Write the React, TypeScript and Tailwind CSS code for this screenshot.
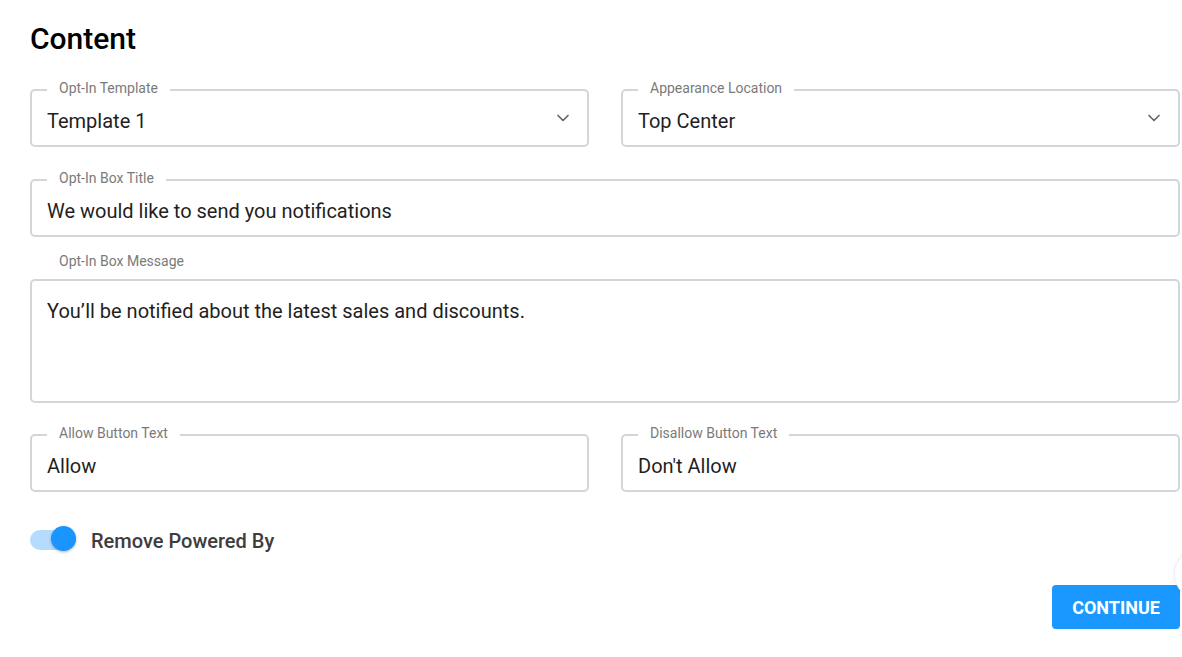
import { ChevronDown } from "lucide-react";

const font = { fontFamily: "Roboto, 'Liberation Sans', sans-serif" };

function OutlinedField({
  label,
  value,
  select = false,
}: {
  label: string;
  value: string;
  select?: boolean;
}) {
  return (
    <div className="relative flex h-[58px] items-center rounded-[5px] border-2 border-[#d2d5da] bg-white pl-[15px] pr-[14px]">
      <span className="absolute -top-[12px] left-[15px] bg-white px-3 text-[14px] leading-[18px] text-[#7a7a7a]">
        {label}
      </span>
      <span className="mt-[5px] flex-1 text-[20px] leading-6 text-[#1f1f1f]">{value}</span>
      {select ? <ChevronDown className="size-5 text-[#5f6670]" strokeWidth={2} aria-hidden="true" /> : null}
    </div>
  );
}

export default function App() {
  return (
    <div className="relative min-h-[657px] overflow-hidden bg-white" style={font}>
      <div className="ml-[30px] w-[1150px] pt-[21px]">
        <h1 className="text-[30px] font-medium leading-9 text-black">Content</h1>

        <div className="mt-[32px] grid grid-cols-2 gap-x-[32px]">
          <OutlinedField label="Opt-In Template" value="Template 1" select />
          <OutlinedField label="Appearance Location" value="Top Center" select />
        </div>

        <div className="mt-[32px]">
          <OutlinedField label="Opt-In Box Title" value="We would like to send you notifications" />
        </div>

        <div className="mt-[15px]">
          <div className="pl-[29px] text-[14px] leading-[18px] text-[#7a7a7a]">Opt-In Box Message</div>
          <div className="mt-[9px] h-[124px] rounded-[5px] border-2 border-[#d2d5da] px-[15px] pt-[18px] text-[20px] leading-6 text-[#1f1f1f]">
            You’ll be notified about the latest sales and discounts.
          </div>
        </div>

        <div className="mt-[31px] grid grid-cols-2 gap-x-[32px]">
          <OutlinedField label="Allow Button Text" value="Allow" />
          <OutlinedField label="Disallow Button Text" value="Don't Allow" />
        </div>

        <div className="mt-[32px] flex items-center gap-[15px]">
          <div className="relative h-[28px] w-[46px]">
            <div className="absolute left-0 top-[5px] h-[20px] w-[46px] rounded-full bg-[#b5dcff]" />
            <div className="absolute left-[21px] top-[1px] size-[25px] rounded-full bg-[#1a94ff] shadow-[0_1px_3px_rgba(0,0,0,0.3)]" />
          </div>
          <span className="mt-[5px] text-[20px] font-medium leading-6 text-[#3d3d3d]">Remove Powered By</span>
        </div>

        <div className="mt-[32px] flex justify-end">
          <button
            type="button"
            className="h-[44px] w-[128px] rounded-[4px] bg-[#1a98ff] text-[18px] font-bold text-white"
          >
            CONTINUE
          </button>
        </div>
      </div>
      <div className="absolute left-[1174px] top-[548px] size-[52px] rounded-full border border-[#eef0f5] bg-white shadow-[0_0_4px_rgba(0,0,0,0.06)]" />
    </div>
  );
}
